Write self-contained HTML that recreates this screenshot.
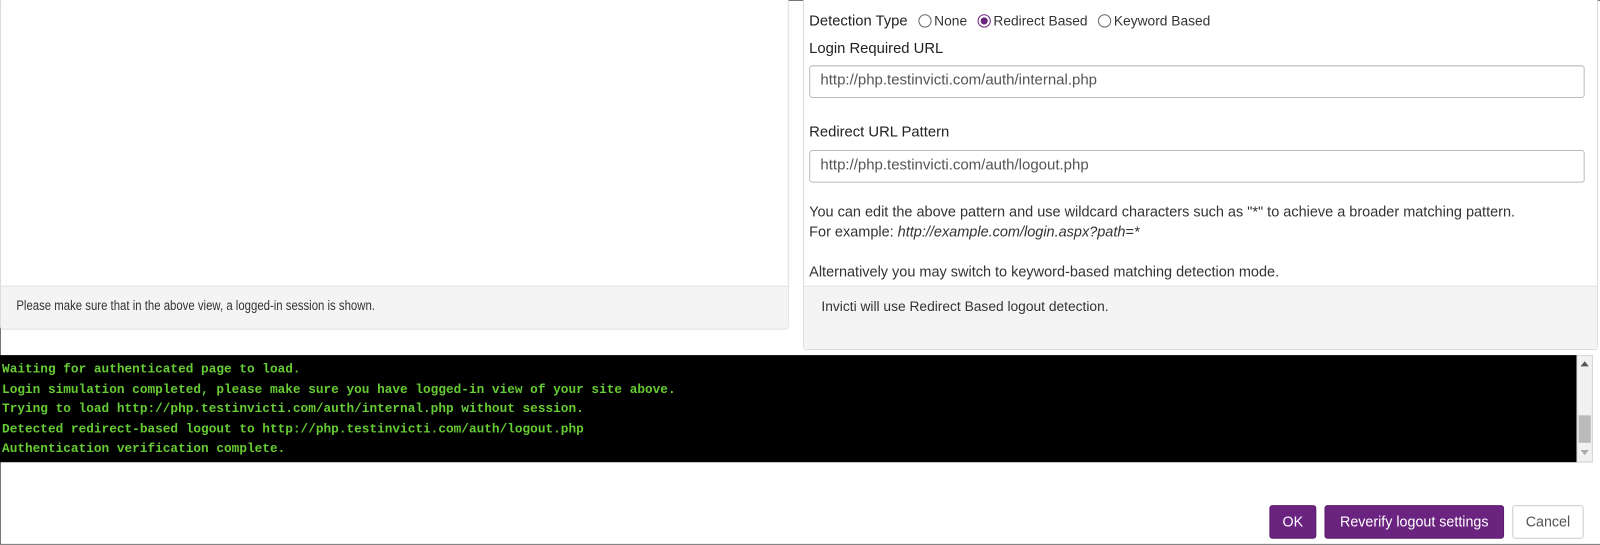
<!DOCTYPE html>
<html><head><meta charset="utf-8"><style>
*{box-sizing:border-box;margin:0;padding:0}
body{width:1600px;height:545px;background:#fff;font-family:"Liberation Sans",sans-serif;color:#333;position:relative;overflow:hidden}
#w{position:absolute;left:0;top:0;width:1568px;height:534px;transform:scale(1.0204);transform-origin:0 0}
.frame{position:absolute;left:0;top:0;width:1599px;height:534px;border:1px solid #777}
.panel{position:absolute;border:1px solid #ddd;border-radius:3px;background:#fff}
.foot{position:absolute;left:0;right:0;bottom:0;background:#f4f4f4;border-top:1px solid #e2e2e2;font-size:13px;color:#333}
.lbl{position:absolute;font-size:14.5px;color:#222}
.inp{position:absolute;left:793px;width:760px;height:32px;border:1px solid #bbb;border-radius:3px;font-size:14.7px;color:#555;padding:6px 10px}
.rad{display:inline-block;width:13px;height:13px;border:1px solid #666;border-radius:50%;vertical-align:-2px;margin:0 3px 0 6px;position:relative}
.rad.on{border-color:#6b2380}
.rad.on:after{content:"";position:absolute;left:2px;top:2px;width:7px;height:7px;border-radius:50%;background:#6b2380}
.small{position:absolute;left:793px;font-size:14.2px;color:#333;white-space:nowrap}
.con{position:absolute;left:0;top:348px;width:1561px;height:105px;background:#000;font-family:"Liberation Mono",monospace;font-size:12.5px;color:#66cc33;padding-top:5px;padding-left:2px;line-height:19.6px;font-weight:bold}
.sb{position:absolute;left:1545px;top:348px;width:16px;height:105px;background:#f1f1f1;border:1px solid #ddd}
.btn{position:absolute;top:495px;height:33px;border-radius:3px;font-size:14px;text-align:center;line-height:31px}
.pur{background:#6b2380;color:#fff;border:1px solid #5a1c6c}
</style></head><body><div id="w">
<div class="frame"></div>
<div class="panel" style="left:0;top:-2px;width:773px;height:325px">
 <div class="foot" style="height:42px;padding:11px 15px;font-size:13.5px"><span style="display:inline-block;white-space:nowrap;transform:scaleX(0.826);transform-origin:0 0">Please make sure that in the above view, a logged-in session is shown.</span></div>
</div>
<div class="panel" style="left:787px;top:-2px;width:779px;height:345px">
 <div class="foot" style="height:62px;padding:12px 17px;font-size:13.5px">Invicti will use Redirect Based logout detection.</div>
</div>
<div class="lbl" style="left:793px;top:13px">Detection Type <span style="font-size:13.5px;color:#333"><span class="rad"></span>None <span class="rad on"></span>Redirect Based <span class="rad"></span>Keyword Based</span></div>
<div class="lbl" style="left:793px;top:40px">Login Required URL</div>
<div class="inp" style="top:64px">http://php.testinvicti.com/auth/internal.php</div>
<div class="lbl" style="left:793px;top:122px">Redirect URL Pattern</div>
<div class="inp" style="top:147px">http://php.testinvicti.com/auth/logout.php</div>
<div class="small" style="top:200px">You can edit the above pattern and use wildcard characters such as "*" to achieve a broader matching pattern.</div>
<div class="small" style="top:220px">For example: <i>http://example.com/login.aspx?path=*</i></div>
<div class="small" style="top:259px">Alternatively you may switch to keyword-based matching detection mode.</div>
<div class="con">Waiting for authenticated page to load.<br>Login simulation completed, please make sure you have logged-in view of your site above.<br>Trying to load http://php.testinvicti.com/auth/internal.php without session.<br>Detected redirect-based logout to http://php.testinvicti.com/auth/logout.php<br>Authentication verification complete.</div>
<div class="sb"><div style="position:absolute;left:3px;top:5px;border:4px solid transparent;border-bottom:5px solid #555;border-top:0"></div><div style="position:absolute;left:1px;top:58px;width:12px;height:27px;background:#bbb"></div><div style="position:absolute;left:3px;top:92px;border:4px solid transparent;border-top:5px solid #aaa;border-bottom:0"></div></div>
<div class="btn pur" style="left:1244px;width:46px">OK</div>
<div class="btn pur" style="left:1298px;width:176px">Reverify logout settings</div>
<div class="btn" style="left:1482px;width:70px;border:1px solid #ccc;color:#555">Cancel</div>
</div></body></html>
